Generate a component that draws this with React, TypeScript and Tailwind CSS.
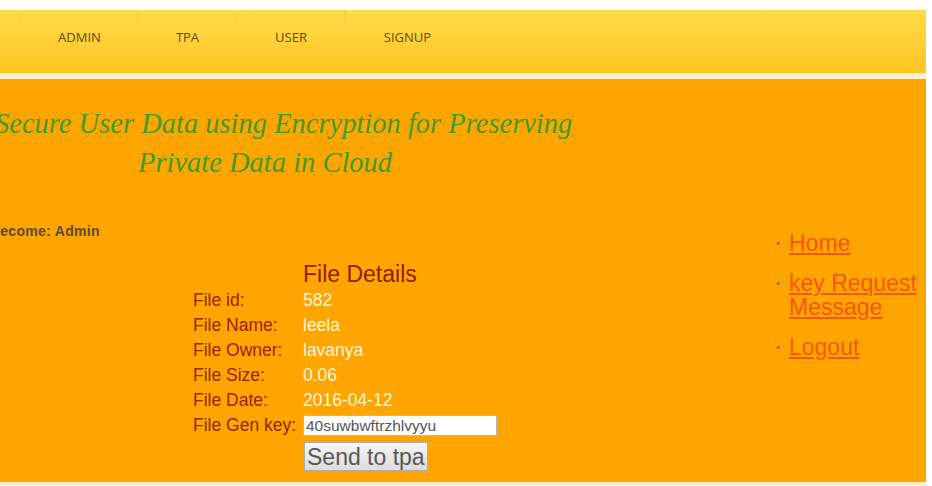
import React from 'react'

const navItems = [
  { label: 'ADMIN', w: 'w-[116px]' },
  { label: 'TPA', w: 'w-[100px]' },
  { label: 'USER', w: 'w-[107px]' },
  { label: 'SIGNUP', w: 'w-[126px]' },
]

const fileRows = [
  { label: 'File id:', value: '582' },
  { label: 'File Name:', value: 'leela' },
  { label: 'File Owner:', value: 'lavanya' },
  { label: 'File Size:', value: '0.06' },
  { label: 'File Date:', value: '2016-04-12' },
]

const links = ['Home', 'key Request Message', 'Logout']

export default function App() {
  return (
    <div className="w-[932px] h-[486px] overflow-hidden bg-white pt-[10px]">
      <div className="w-[926px]">
        {/* nav bar */}
        <div className="h-[63px] bg-gradient-to-b from-[#ffdc47] to-[#ffc422] flex pl-[21px] font-['Open_Sans',sans-serif]">
          {navItems.map((item) => (
            <div key={item.label} className={`flex ${item.w}`}>
              <div className="w-px h-[23px] shrink-0 bg-gradient-to-b from-[#f0c640] to-transparent" />
              <div className="flex-1 text-center pt-[17px] text-[13px] text-[#5e4c17] leading-[20px]">{item.label}</div>
            </div>
          ))}
        </div>
        <div className="h-[6px] bg-[#fdf0cc]" />

        {/* main */}
        <div className="h-[403px] bg-[#ffa500] flex">
          <div className="w-[768px] pt-[25px]">
            <div className="font-['Liberation_Serif',serif] italic text-[#3e9c2b] text-[28.5px] leading-[39px]">
              <div className="ml-[-5px] whitespace-nowrap">Secure User Data using Encryption for Preserving</div>
              <div className="pl-[138px] whitespace-nowrap">Private Data in Cloud</div>
            </div>

            <div className="mt-[41px] ml-[-13px] font-['Liberation_Sans',sans-serif] font-bold text-[14px] tracking-[0.3px] text-[#5c4a36] leading-[16px]">
              Wecome: Admin
            </div>

            <div className="mt-[22px] ml-[193px] font-['Liberation_Sans',sans-serif]">
              <div className="pl-[110px] text-[23px] leading-[27px] text-[#8e1e00]">File Details</div>
              {fileRows.map((row) => (
                <div key={row.label} className="flex h-[25px] items-center text-[17.5px]">
                  <div className="w-[110px] text-[#9c2200]">{row.label}</div>
                  <div className="text-[#fff5dc]">{row.value}</div>
                </div>
              ))}
              <div className="flex h-[25px] items-center text-[17.5px]">
                <div className="w-[110px] text-[#9c2200] whitespace-nowrap">File Gen key:</div>
                <div className="w-[194px] h-[21px] bg-white border border-[#b9b9b9] text-[15.5px] leading-[19px] text-[#555] pl-[2px] overflow-hidden">
                  40suwbwftrzhlvyyu
                </div>
              </div>
              <div className="pl-[111px] mt-[4px]">
                <button className="h-[29px] px-[2px] bg-gradient-to-b from-[#f6f6f6] to-[#dcdcdc] border border-[#adadad] text-[23px] leading-[26px] text-[#585858] font-['Liberation_Sans',sans-serif]">
                  Send to tpa
                </button>
              </div>
            </div>
          </div>

          <ul className="pt-[152px] pl-[8px] w-[158px] font-['Liberation_Sans',sans-serif] text-[23px] leading-[24px]">
            {links.map((l) => (
              <li key={l} className="flex mb-[16px]">
                <span className="w-[13px] shrink-0 text-[#8a6a3a] text-[11px] leading-[24px]">•</span>
                <a href="#" className="text-[#f7570d] underline underline-offset-2">{l}</a>
              </li>
            ))}
          </ul>
        </div>
        <div className="h-[4px] bg-[#fdf0cc]" />
      </div>
    </div>
  )
}
